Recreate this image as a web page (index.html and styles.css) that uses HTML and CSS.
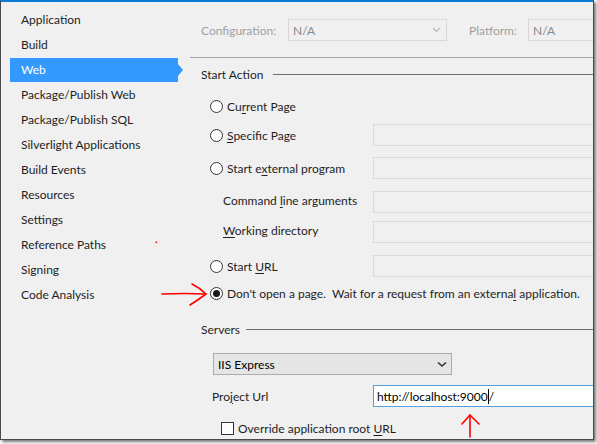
FILE: index.html
```html
<!DOCTYPE html>
<html>
<head>
<meta charset="utf-8">
<link rel="stylesheet" href="styles.css">
</head>
<body>
<div class="window">
  <nav class="sidebar">
    <div class="nav-item">Application</div>
    <div class="nav-item">Build</div>
    <div class="nav-item active">Web</div>
    <div class="nav-item">Package/Publish Web</div>
    <div class="nav-item">Package/Publish SQL</div>
    <div class="nav-item">Silverlight Applications</div>
    <div class="nav-item">Build Events</div>
    <div class="nav-item">Resources</div>
    <div class="nav-item">Settings</div>
    <div class="nav-item">Reference Paths</div>
    <div class="nav-item">Signing</div>
    <div class="nav-item">Code Analysis</div>
  </nav>
  <main class="content">
    <div class="config-row">
      <span class="cfg-label cfg-conf">Configuration:</span>
      <div class="select disabled cfg-select">
        <span>N/A</span>
        <svg class="chev" width="9" height="6" viewBox="0 0 9 6"><path d="M1 1 L4.5 4.5 L8 1" fill="none" stroke="#b8b8b8" stroke-width="1.2"/></svg>
      </div>
      <span class="cfg-label cfg-plat">Platform:</span>
      <div class="select disabled plat-select"><span>N/A</span></div>
    </div>

    <div class="group-header start-header"><span>Start Action</span><span class="rule"></span></div>

    <div class="row m12">
      <label class="radio"><span class="radio-btn"></span><span>Cu<u>r</u>rent Page</span></label>
    </div>
    <div class="row m7">
      <label class="radio"><span class="radio-btn"></span><span><u>S</u>pecific Page</span></label>
      <div class="textbox"></div>
    </div>
    <div class="row m11">
      <label class="radio"><span class="radio-btn"></span><span>Start e<u>x</u>ternal program</span></label>
      <div class="textbox"></div>
    </div>
    <div class="row m12">
      <label class="sub-label"><span>Command <u>l</u>ine arguments</span></label>
      <div class="textbox"></div>
    </div>
    <div class="row m8">
      <label class="sub-label"><span><u>W</u>orking directory</span></label>
      <div class="textbox"></div>
    </div>
    <div class="row m12">
      <label class="radio"><span class="radio-btn"></span><span>Start <u>U</u>RL</span></label>
      <div class="textbox"></div>
    </div>
    <div class="row m6">
      <label class="radio wide"><span class="radio-btn checked"></span><span>Don't open a page.&nbsp; Wait for a request from an externa<u>l</u> application.</span></label>
    </div>

    <div class="group-header servers-header"><span>Servers</span><span class="rule"></span></div>

    <div class="select server-select">
      <span>IIS Express</span>
      <svg class="chev" width="10" height="7" viewBox="0 0 10 7"><path d="M1 1.5 L5 5 L9 1.5" fill="none" stroke="#333" stroke-width="1.6"/></svg>
    </div>

    <div class="row m10">
      <label class="url-label"><span>Pro<u>j</u>ect Url</span></label>
      <div class="textbox active"><span>http://localhost:9000</span><span class="caret"></span><span>/</span></div>
    </div>
    <div class="row m11">
      <label class="check"><span class="check-box"></span><span>Override application root <u>U</u>RL</span></label>
    </div>
  </main>

  <svg class="annotations" width="597" height="444" viewBox="0 0 597 444">
    <g fill="none" stroke="#ff0000" stroke-width="1.6" stroke-linecap="round" stroke-linejoin="round">
      <path d="M162 294 Q185 293 206 294"/>
      <path d="M192 284 Q200 288 206 294 Q198 300 190 305"/>
      <path d="M470 437 L470 415"/>
      <path d="M462 424 L470 415 L479 424"/>
    </g>
    <rect x="155.5" y="241.5" width="1.6" height="1.6" fill="#ff0000"/>
  </svg>
</div>
</body>
</html>
```

FILE: styles.css
```css
* { box-sizing: border-box; }

html, body {
  margin: 0;
  padding: 0;
  background: #ffffff;
}

body {
  font-family: Lato, "Noto Sans", sans-serif;
  font-size: 12px;
  color: #1e1e1e;
  width: 597px;
  height: 444px;
  overflow: hidden;
}

.window {
  position: relative;
  width: 594px;
  height: 440px;
  background: #f0f0f0;
  border-top: 2px solid #0b7ad4;
  border-left: 1px solid #4a4a4a;
  border-right: 1px solid #4a4a4a;
  border-bottom: 1px solid #4a4a4a;
  box-shadow: 2px 2px 3px rgba(0, 0, 0, 0.55);
  display: grid;
  grid-template-columns: 189px 1fr;
  overflow: hidden;
}

/* Sidebar */
.sidebar {
  padding-top: 5px;
  display: flex;
  flex-direction: column;
}

.nav-item {
  position: relative;
  height: 25px;
  line-height: 25px;
  margin-left: 9px;
  width: 168px;
  padding-left: 11px;
  white-space: nowrap;
}

.nav-item.active {
  background: #3399ff;
  color: #ffffff;
  height: 24px;
  line-height: 24px;
  margin-top: 1px;
}

.nav-item.active::after {
  content: "";
  position: absolute;
  right: -5px;
  top: 6px;
  border-left: 5px solid #3399ff;
  border-top: 6px solid transparent;
  border-bottom: 6px solid transparent;
}

/* Content */
.content {
  display: flex;
  flex-direction: column;
  padding-left: 11px;
  min-width: 0;
  overflow: hidden;
}

.config-row {
  display: flex;
  align-items: center;
  padding-top: 17px;
  padding-bottom: 16px;
  border-bottom: 1px solid #a6a6a6;
  margin-left: -11px;
  padding-left: 11px;
  white-space: nowrap;
}

.cfg-label {
  color: #a0a0a0;
  flex: none;
}

.cfg-conf { width: 87px; }
.cfg-plat { width: 59px; margin-left: 22px; }

.select {
  height: 22px;
  display: flex;
  align-items: center;
  justify-content: space-between;
  padding: 0 4px 0 4px;
  flex: none;
}

.select.disabled {
  border: 1px solid #d9d9d9;
  background: #f0f0f0;
  color: #8a8a8a;
}

.cfg-select { width: 159px; padding-right: 5px; }
.plat-select { width: 120px; }

.group-header {
  display: flex;
  align-items: center;
  height: 20px;
  white-space: nowrap;
}

.group-header .rule {
  flex: 1;
  height: 1px;
  background: #6e6e6e;
  margin-left: 10px;
}

.start-header { margin-top: 7px; }
.servers-header { margin-top: 16px; }
.servers-header .rule { margin-left: 6px; }

.row {
  display: grid;
  grid-template-columns: 172px 240px;
  align-items: center;
  height: 22px;
  white-space: nowrap;
}

.m6 { margin-top: 6px; }
.m7 { margin-top: 7px; }
.m8 { margin-top: 8px; }
.m10 { margin-top: 10px; }
.m11 { margin-top: 11px; }
.m12 { margin-top: 12px; }

u { text-decoration: underline; text-underline-offset: 2px; }

.radio {
  display: flex;
  align-items: center;
  padding-left: 9px;
}

.radio.wide { grid-column: 1 / 3; }

.radio-btn {
  width: 13px;
  height: 13px;
  border-radius: 50%;
  border: 1px solid #333333;
  background: #ffffff;
  margin-right: 4px;
  flex: none;
  display: flex;
  align-items: center;
  justify-content: center;
}

.radio-btn.checked::after {
  content: "";
  width: 7px;
  height: 7px;
  border-radius: 50%;
  background: #1a1a1a;
}

.sub-label {
  padding-left: 22px;
  margin-top: -3px;
}

.url-label {
  padding-left: 11px;
}

.textbox {
  height: 22px;
  border: 1px solid #d9d9d9;
  background: #f0f0f0;
  display: flex;
  align-items: center;
  padding-left: 3px;
}

.textbox.active {
  border-color: #5b9fe3;
  background: #ffffff;
  color: #000000;
}

.caret {
  display: inline-block;
  width: 1px;
  height: 15px;
  background: #000000;
}

.server-select {
  margin-top: 14px;
  margin-left: 12px;
  width: 239px;
  border: 1px solid #acacac;
  background: #e5e5e5;
  color: #000000;
  padding-right: 4px;
}

.check {
  display: flex;
  align-items: center;
  padding-left: 20px;
  grid-column: 1 / 3;
}

.check-box {
  width: 13px;
  height: 13px;
  border: 1px solid #333333;
  background: #ffffff;
  margin-right: 4px;
  flex: none;
}

.annotations {
  position: absolute;
  left: -1px;
  top: -2px;
  pointer-events: none;
}
```
